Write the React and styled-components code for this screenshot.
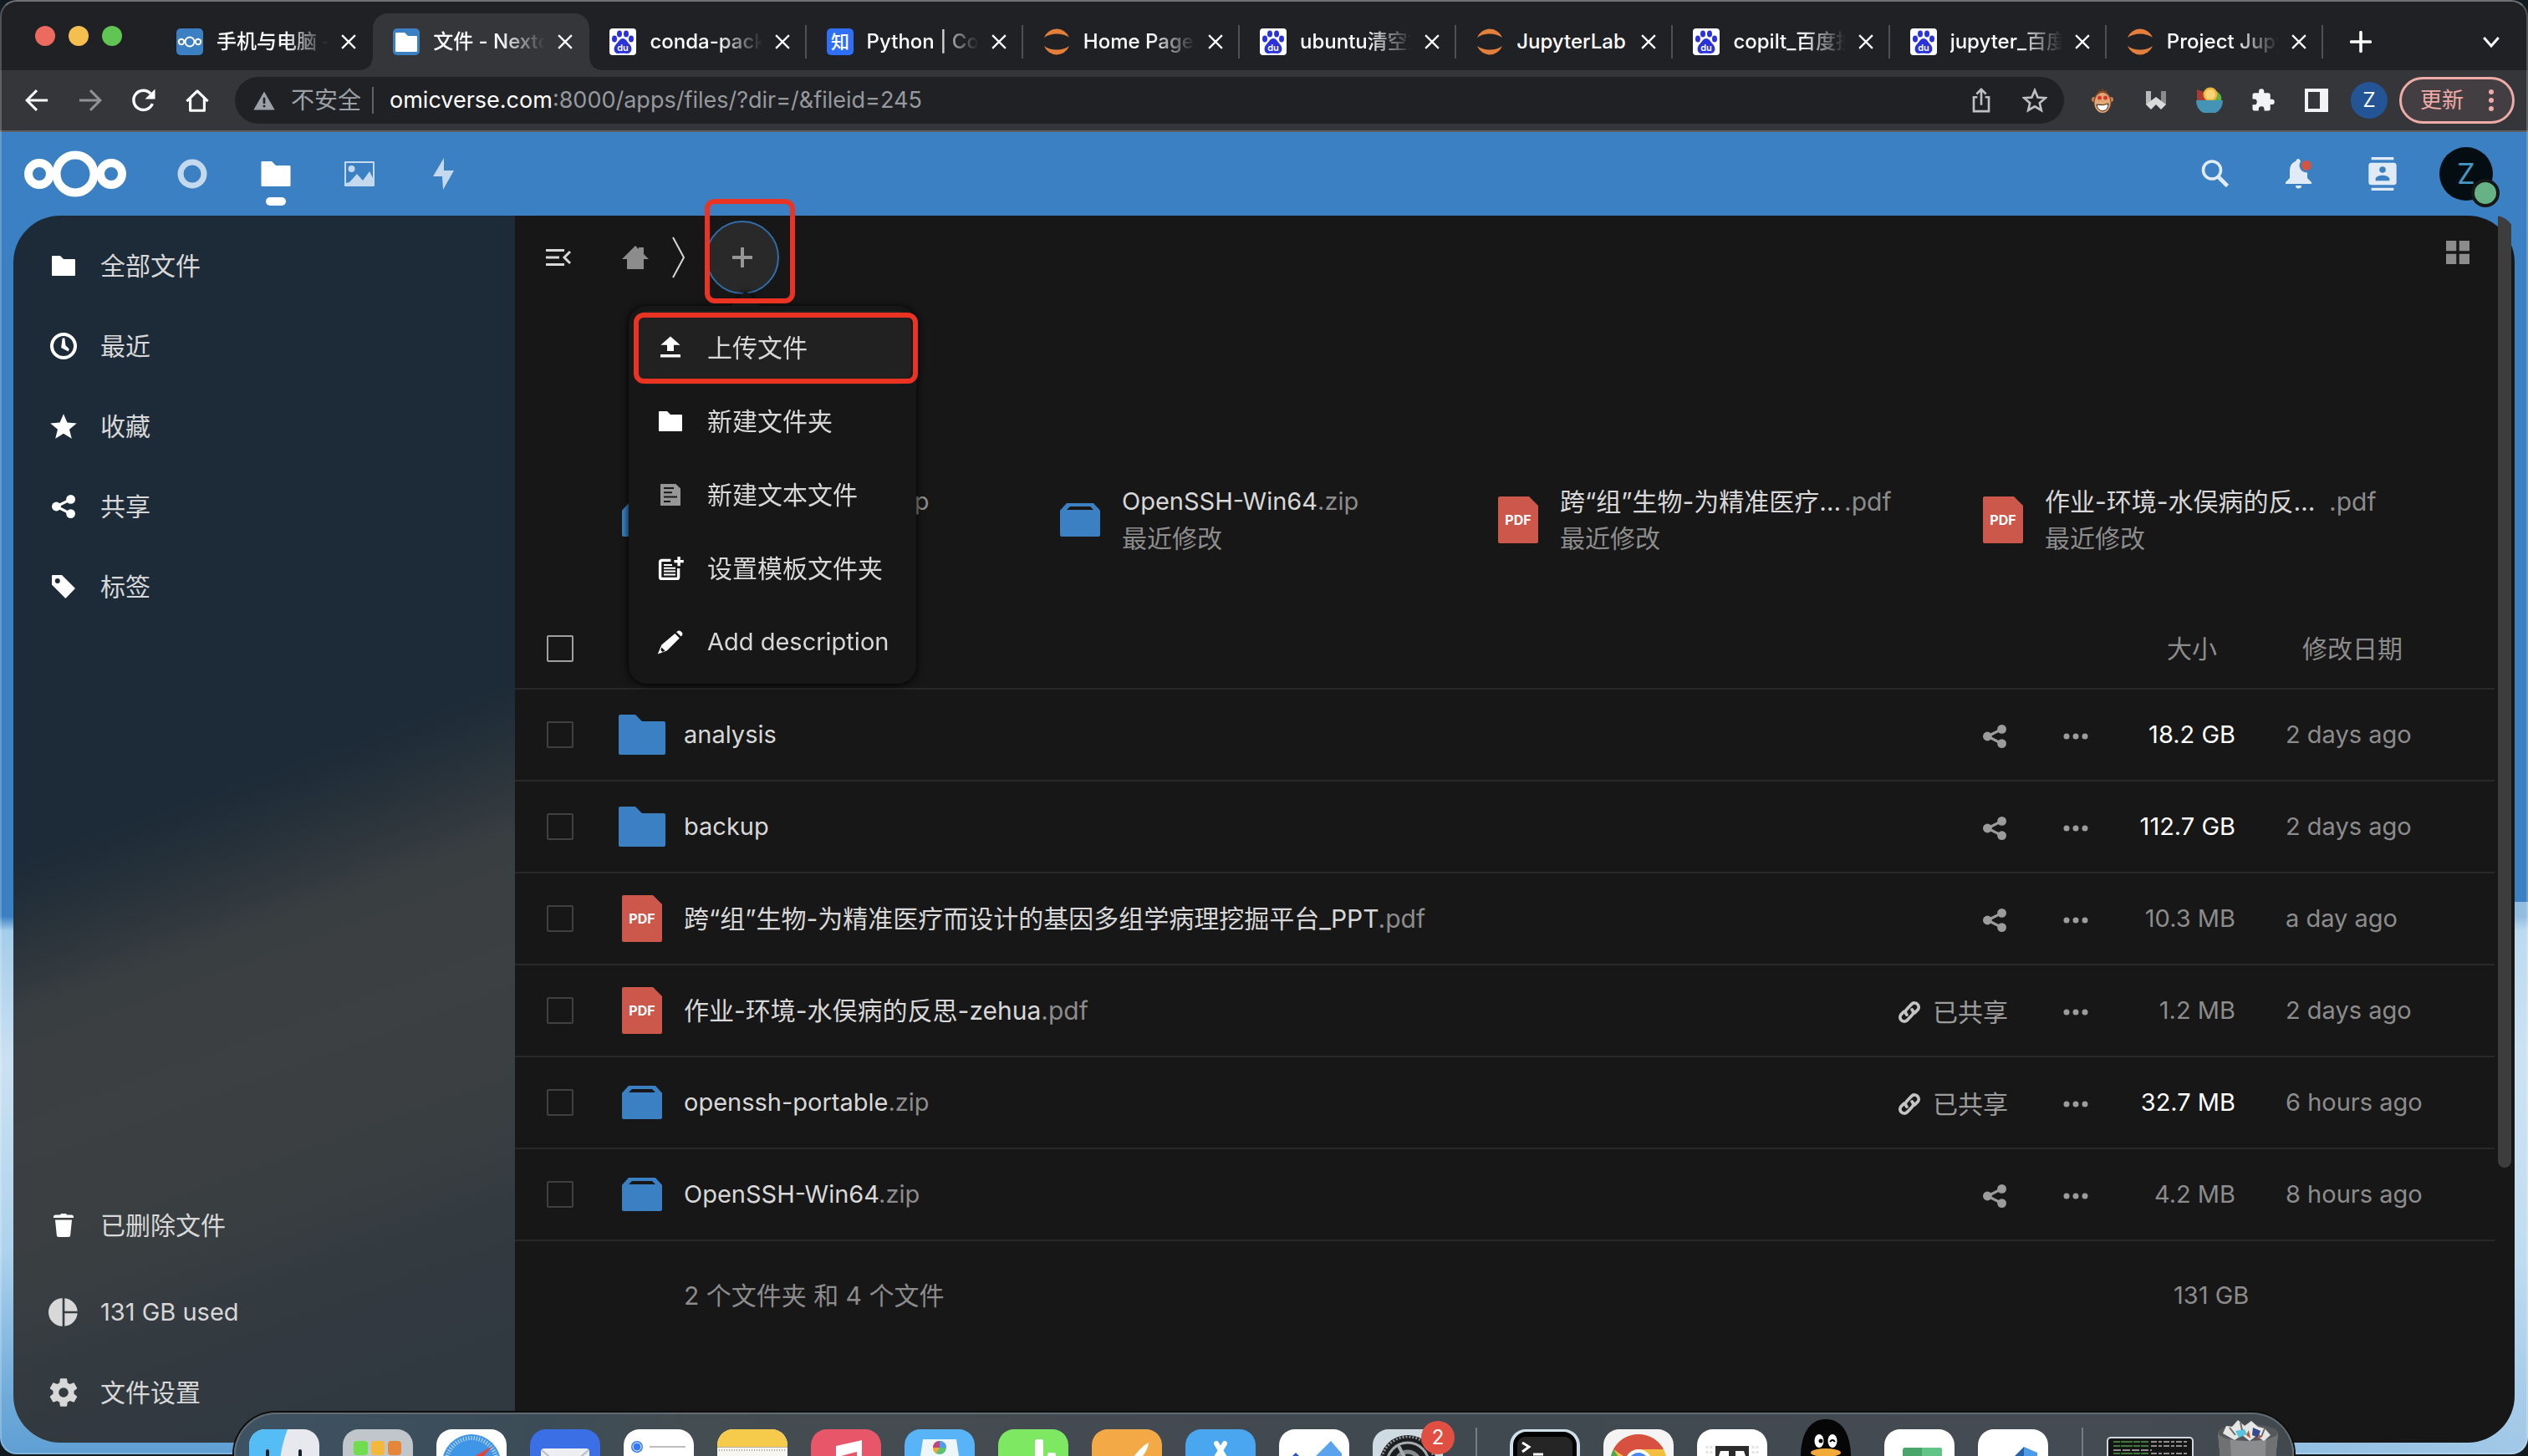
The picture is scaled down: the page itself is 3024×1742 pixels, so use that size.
import React from "react";
import styled, { createGlobalStyle, css } from "styled-components";

const color = {
  blue: "#3a80c3",
  bg: "#171717",
  line: "#292929",
  text: "#d8d8d8",
  muted: "#8c8c8c",
  chrome: "#202124",
  chromeLight: "#35363a",
  red: "#ea3323",
};

/* Latin-only labels are set one step smaller than the Chinese ones. */
const size = { cjk: "30px", latin: "29px" };

const isLatin = (text) => /^[\x20-\x7e]*$/.test(text);

const labelSize = css`
  font-size: ${(p) => (p.$latin ? size.latin : size.cjk)};
`;

const GlobalStyle = createGlobalStyle`
  * { box-sizing: border-box; }
  body {
    margin: 0;
    background: #111a1f;
    font-family: Inter, "Noto Sans CJK SC", sans-serif;
    font-size: ${size.cjk};
    line-height: 44px;
    color: ${color.text};
  }
  button, input {
    font: inherit;
    color: inherit;
    border: 0;
    padding: 0;
    background: none;
    outline: none;
  }
  a { color: inherit; text-decoration: none; }
  svg { display: block; flex: none; }
`;

const Screen = styled.div`
  position: relative;
  height: 100vh;
  padding-bottom: 2px;
  overflow: hidden;
  display: flex;
`;

const Window = styled.div`
  position: relative;
  flex: 1;
  min-width: 0;
  display: flex;
  flex-direction: column;
  border-radius: 20px;
  overflow: hidden;
  background:
    linear-gradient(90deg, transparent 60%, rgba(205, 227, 243, 0.6)) 0 100% / 100% 38% no-repeat,
    linear-gradient(180deg, ${color.blue} 63%, #a4cdea 64%, #cbe1f1 73%, #aed3ec 86%, #6fabda 96%, #5f9fd3 100%);

  &::after {
    content: "";
    position: absolute;
    inset: 0;
    border: 2px solid rgba(255, 255, 255, 0.22);
    border-top-color: rgba(255, 255, 255, 0.36);
    border-radius: 20px;
    pointer-events: none;
  }
`;

/* ---------- browser chrome ---------- */

const TabStrip = styled.div`
  height: 84px;
  flex: none;
  display: flex;
  align-items: flex-end;
  background: ${color.chrome};
  font-size: 24px;
  line-height: 32px;
  color: #fff;
`;

const Lights = styled.div`
  width: 187px;
  height: 82px;
  padding-left: 42px;
  display: flex;
  align-items: center;
  gap: 16px;
`;

const Light = styled.button`
  width: 24px;
  height: 24px;
  border-radius: 50%;
  background: ${(p) => p.$color};
`;

const TabList = styled.div`
  flex: 1;
  min-width: 0;
  display: flex;
`;

const flare = css`
  content: "";
  position: absolute;
  bottom: 0;
  width: 14px;
  height: 14px;
`;

const Tab = styled.div`
  position: relative;
  flex: 1 1 0;
  min-width: 0;
  height: 68px;
  padding-left: 24px;
  display: flex;
  align-items: center;
  border-radius: 18px 18px 0 0;
  ${(p) =>
    p.$active &&
    css`
      background: ${color.chromeLight};
      &::before {
        ${flare}
        left: -14px;
        background: radial-gradient(circle at 0 0, transparent 13px, ${color.chromeLight} 14px);
      }
      &::after {
        ${flare}
        right: -14px;
        background: radial-gradient(circle at 100% 0, transparent 13px, ${color.chromeLight} 14px);
      }
    `}
`;

const TabTitle = styled.button`
  flex: 1;
  min-width: 0;
  margin: 0 10px 0 16px;
  text-align: left;
  white-space: nowrap;
  overflow: hidden;
  font-weight: 500;
  ${(p) => p.$fade && css`mask-image: linear-gradient(90deg, #000 60%, transparent);`}
`;

const TabClose = styled.button`
  width: 28px;
  height: 28px;
  margin-right: 13px;
  display: grid;
  place-items: center;
`;

const TabDivider = styled.i`
  width: 2px;
  height: 40px;
  background: ${(p) => (p.$hidden ? "transparent" : "#4e5054")};
`;

const StripEnd = styled.div`
  width: 245px;
  height: 68px;
  padding: 0 34px 0 32px;
  display: flex;
  align-items: center;
  justify-content: space-between;
`;

const Toolbar = styled.div`
  height: 74px;
  flex: none;
  display: flex;
  align-items: center;
  padding: 0 16px 0 12px;
  background: ${color.chromeLight};
  border-bottom: 2px solid #5f6064;
`;

const ToolButton = styled.button`
  width: 64px;
  height: 56px;
  display: grid;
  place-items: center;
  opacity: ${(p) => (p.disabled ? 0.45 : 1)};
`;

const AddressBar = styled.div`
  flex: 1;
  min-width: 0;
  height: 56px;
  margin: 0 14px 0 13px;
  padding: 0 3px 0 22px;
  display: flex;
  align-items: center;
  border-radius: 28px;
  background: ${color.chrome};
  font-size: 27px;
  line-height: 40px;
`;

const Insecure = styled.span`
  margin: 0 13px 0 19px;
  font-size: 28px;
  color: #9aa0a6;
`;

const AddressRule = styled.i`
  width: 2px;
  height: 32px;
  margin-right: 19px;
  background: #5f6368;
`;

const Host = styled.label`
  color: #fff;
`;

const PathInput = styled.input`
  flex: 1;
  min-width: 0;
  color: #96999e;
`;

const Profile = styled.button`
  width: 44px;
  height: 44px;
  margin: 0 14px 0 9px;
  border-radius: 50%;
  background: #235596;
  color: #fff;
  font-size: 24px;
  line-height: 44px;
`;

const UpdateButton = styled.button`
  width: 138px;
  height: 56px;
  padding: 0 22px 0 22px;
  display: flex;
  align-items: center;
  justify-content: space-between;
  border: 3px solid #efaba7;
  border-radius: 28px;
  background: #433e41;
  color: #efaba7;
  font-size: 26px;
`;

/* ---------- files app ---------- */

const AppHeader = styled.header`
  height: 100px;
  flex: none;
  display: flex;
  align-items: center;
  padding: 0 24px 0 28px;
`;

const Logo = styled.a`
  margin-right: 28px;
`;

const AppNav = styled.nav`
  flex: 1;
  display: flex;
`;

const HeaderLink = styled.a`
  position: relative;
  width: 100px;
  height: 100px;
  display: grid;
  place-items: center;
  color: ${(p) => (p.$active ? "#fff" : "#c4d9ed")};
  ${(p) =>
    p.$active &&
    css`
      &::after {
        content: "";
        position: absolute;
        bottom: 12px;
        width: 24px;
        height: 10px;
        border-radius: 5px;
        background: #fff;
      }
    `}
`;

const HeaderButton = styled.button`
  width: 100px;
  height: 100px;
  display: grid;
  place-items: center;
  color: #e1ebf5;
`;

const Avatar = styled.span`
  position: relative;
  width: 64px;
  height: 64px;
  border-radius: 50%;
  background: #040d12;
  color: #4397c0;
  font-size: 34px;
  line-height: 64px;
`;

const Status = styled.i`
  position: absolute;
  right: -8px;
  bottom: -8px;
  width: 34px;
  height: 34px;
  border-radius: 50%;
  border: 4px solid ${color.bg};
  background: #67b187;
`;

const Content = styled.div`
  flex: 1;
  min-height: 0;
  margin: 0 16px 14px;
  display: flex;
`;

const Sidebar = styled.nav`
  width: 600px;
  flex: none;
  padding: 16px 0;
  display: flex;
  flex-direction: column;
  justify-content: space-between;
  border-radius: 56px 0 0 56px;
  background: linear-gradient(160deg, #1d2b38 0 46%, #253039 50%, #393e41 57%, #3d4042 66%, #393e41 76%, #323a40 86%, #2f3840 100%);
`;

const NavGroup = styled.ul`
  margin: 0;
  padding: 0;
  list-style: none;
  display: flex;
  flex-direction: column;
  gap: 8px;
`;

const NavLink = styled.a`
  height: 88px;
  padding-left: 44px;
  display: flex;
  align-items: center;
  gap: 28px;
  ${labelSize}
`;

const WideLink = styled(NavLink)`
  padding-left: 40px;
  gap: 24px;
`;

const NavSpacer = styled.li`
  height: 0;
`;

const Main = styled.main`
  flex: 1;
  min-width: 0;
  display: flex;
  border-radius: 0 56px 56px 0;
  background: ${color.bg};
`;

const Files = styled.div`
  flex: 1;
  min-width: 0;
`;

const ScrollTrack = styled.div`
  width: 24px;
  padding-left: 4px;
  overflow: hidden;
  border-radius: 0 56px 56px 0 / 0 56px 56px 0;
`;

const ScrollThumb = styled.div`
  width: 16px;
  height: 77.6%;
  border-radius: 0 0 8px 8px;
  background: #3d3d3d;
`;

const Controls = styled.div`
  height: 100px;
  padding-left: 8px;
  display: flex;
  align-items: center;
`;

const IconButton = styled.button`
  width: 88px;
  height: 88px;
  display: grid;
  place-items: center;
  color: ${(p) => p.$color || color.muted};
`;

const Crumb = styled.a`
  width: 88px;
  height: 88px;
  margin-left: 4px;
  display: grid;
  place-items: center;
  color: ${color.muted};
`;

const NewWrap = styled.div`
  position: relative;
  margin-left: 24px;
  z-index: 2;
`;

const NewButton = styled.button`
  width: 88px;
  height: 88px;
  display: grid;
  place-items: center;
  border: 2px solid #2f6ea9;
  border-radius: 50%;
  background: #292929;
  color: #969696;
`;

const ViewToggle = styled(IconButton)`
  margin-left: auto;
  align-self: flex-start;
`;

const Highlight = styled.i`
  position: absolute;
  border: 6px solid ${color.red};
  border-radius: 12px;
  pointer-events: none;
  inset: ${(p) => p.$inset};
`;

const Menu = styled.ul`
  position: absolute;
  top: 102px;
  left: -92px;
  width: 344px;
  margin: 0;
  padding: 6px;
  list-style: none;
  border-radius: 22px;
  background: ${color.bg};
  filter: drop-shadow(0 1px 5px #000);

  &::before {
    content: "";
    position: absolute;
    bottom: 100%;
    left: 122px;
    border: 18px solid transparent;
    border-top: 0;
    border-bottom-color: ${color.bg};
  }
`;

const MenuRow = styled.li`
  position: relative;
`;

const MenuItem = styled.button`
  width: 100%;
  height: 88px;
  padding-left: 28px;
  display: flex;
  align-items: center;
  gap: 28px;
  text-align: left;
  white-space: nowrap;
  border-radius: 18px;
  background: ${(p) => (p.$active ? "#212121" : "none")};
  ${labelSize}
`;

const MenuIcon = styled.span`
  color: ${(p) => (p.$dim ? "#969696" : "#fff")};
`;

const Recommendations = styled.section`
  padding: 218px 0 60px 120px;
  display: grid;
  grid-template-columns: 524fr 524fr 580fr 620fr;
`;

const RecCard = styled.a`
  height: 92px;
  display: flex;
  align-items: center;
  gap: 18px;
  white-space: nowrap;
`;

const RecName = styled.div`
  display: flex;
  ${labelSize}
`;

const RecStem = styled.span`
  min-width: ${(p) => (p.$cut ? "340px" : "0")};
`;

const Muted = styled.span`
  color: ${color.muted};
`;

const Table = styled.table`
  width: 100%;
  table-layout: fixed;
  border-collapse: collapse;
  text-align: left;

  th { font-weight: 400; color: ${color.muted}; }
  th, td { padding: 0; }
`;

const HeadRow = styled.tr`
  height: 96px;
  border-bottom: 2px solid ${color.line};
`;

const FileRow = styled.tr`
  height: 110px;
  border-bottom: 2px solid ${color.line};
`;

const FootRow = styled.tr`
  height: 130px;
  color: ${color.muted};
`;

const Col = styled.col`
  width: ${(p) => p.$w};
`;

const Check = styled.input.attrs({ type: "checkbox" })`
  appearance: none;
  display: block;
  width: 32px;
  height: 32px;
  margin: 0 0 0 38px;
  border: 2px solid ${(p) => (p.$strong ? "#a0a0a0" : "#404040")};
  border-radius: 2px;
`;

const NameLink = styled.a`
  display: flex;
  align-items: center;
  gap: 18px;
  white-space: nowrap;
  ${labelSize}
`;

const RowAction = styled.button`
  display: flex;
  align-items: center;
  gap: 13px;
  margin-left: auto;
  margin-top: 4px;
  color: #9c9c9c;
`;

const ActionsCell = styled.td`
  && { padding-right: 34px; }
`;

const SizeCell = styled.td`
  text-align: right;
  white-space: nowrap;
  font-size: ${size.latin};
  color: ${(p) => (p.$bright ? "#fff" : color.muted)};
`;

const DateCell = styled.td`
  && { padding-left: 60px; }
  font-size: ${size.latin};
  color: ${color.muted};
`;

const SizeHead = styled.th`
  && { padding-right: 22px; }
  text-align: right;
`;

const DateHead = styled.th`
  && { padding-left: 80px; }
`;

const TotalCell = styled.td`
  && { padding-left: 66px; }
  font-size: ${size.latin};
`;

const FootName = styled.td`
  && { padding-left: 82px; }
`;

/* ---------- dock ---------- */

const Dock = styled.div`
  position: absolute;
  bottom: 0;
  left: 50%;
  transform: translateX(-50%);
  height: 52px;
  padding: 18px 16px 0;
  display: flex;
  align-items: flex-start;
  gap: 28px;
  overflow: hidden;
  border: 2px solid #626b70;
  border-bottom: 0;
  border-radius: 50px 50px 0 0;
  box-shadow: 0 0 0 2px #0c0e0f;
  background: linear-gradient(90deg, #3d5262, #3c4c57 15%, #444d51 22%, #434a51 45%, #3f494f 60%, #454b52 90%, #41494f);
`;

const DockItem = styled.button`
  position: relative;
  height: 84px;
`;

const TallDockItem = styled(DockItem)`
  margin-top: -12px;
`;

const DockRule = styled.i`
  width: 2px;
  height: 60px;
  margin: ${(p) => (p.$last ? "-2px 0 0 12px" : "-2px 11px 0")};
  background: #767d82;
`;

const Badge = styled.span`
  position: absolute;
  top: -10px;
  right: -14px;
  width: 40px;
  height: 40px;
  border-radius: 50%;
  background: #e04f41;
  color: #fff;
  font-size: 24px;
  line-height: 40px;
`;

/* ---------- icons ---------- */

const Svg = ({ s = 32, w, h, box = "0 0 16 16", children, ...rest }) => (
  <svg width={w || s} height={h || s} viewBox={box} fill="currentColor" aria-hidden="true" {...rest}>
    {children}
  </svg>
);

const stroke = (width) => ({ fill: "none", stroke: "currentColor", strokeWidth: width });

const FolderIcon = (p) => (
  <Svg {...p}>
    <path d="M1.5 2a.5.5 0 0 0-.5.5v11c0 .3.2.5.5.5h13c.3 0 .5-.2.5-.5v-9a.5.5 0 0 0-.5-.5H8L6 2z" />
  </Svg>
);

const ShareIcon = (p) => (
  <Svg {...p}>
    <circle cx="12.3" cy="3.7" r="2.7" />
    <circle cx="3.7" cy="8" r="2.7" />
    <circle cx="12.3" cy="12.3" r="2.7" />
    <path {...stroke(1.6)} d="M12.3 3.7 3.7 8l8.6 4.3" />
  </Svg>
);

const ClockIcon = () => (
  <Svg>
    <circle cx="8" cy="8" r="7" {...stroke(2)} />
    <path d="M7.3 3.2h1.4l.5 4.4 2.2 2.2-.6 1.4L6.6 9z" />
  </Svg>
);

const StarIcon = () => (
  <Svg>
    <path d="m8 .6 2.2 5.2 5.7.4-4.4 3.7 1.4 5.5L8 12.4l-4.9 3 1.4-5.5L.1 6.2l5.7-.4z" />
  </Svg>
);

const TagIcon = () => (
  <Svg>
    <path fillRule="evenodd" d="M1.5 1H7l8 8-5.8 6L1 6.8V1.5a.5.5 0 0 1 .5-.5zm2.9 2a1.5 1.5 0 1 0 0 3 1.5 1.5 0 0 0 0-3z" />
  </Svg>
);

const TrashIcon = () => (
  <Svg>
    <path d="M6.5 1 6 1.8H3.2c-.7 0-1.2.5-1.2 1v.7h12v-.7c0-.5-.5-1-1.2-1H10L9.5 1zM3 4.7l.9 9.2c.1.7.5 1.1 1.2 1.1h5.8c.7 0 1.1-.4 1.2-1.1l.9-9.2z" />
  </Svg>
);

const QuotaIcon = () => (
  <Svg s={40} box="0 0 24 24">
    <path d="M11.200 2v20A10 10 0 0 1 11.200 2zm1.600 0v9.200H22A10 10 0 0 0 12.800 2zm0 10.800V22A10 10 0 0 0 22 12.800z" />
  </Svg>
);

const CogIcon = () => (
  <Svg s={40} box="0 0 24 24">
    <path d="M12 15.5A3.5 3.5 0 0 1 8.5 12 3.5 3.5 0 0 1 12 8.5a3.5 3.5 0 0 1 3.5 3.5 3.5 3.5 0 0 1-3.5 3.5m7.43-2.53c.04-.32.07-.64.07-.97s-.03-.66-.07-1l2.11-1.63c.19-.15.24-.42.12-.64l-2-3.46c-.12-.22-.39-.31-.61-.22l-2.49 1c-.52-.39-1.06-.73-1.69-.98l-.37-2.65A.506.506 0 0 0 14 2h-4c-.25 0-.46.18-.5.42l-.37 2.65c-.63.25-1.17.59-1.69.98l-2.49-1c-.22-.09-.49 0-.61.22l-2 3.46c-.13.22-.07.49.12.64L4.57 11c-.04.34-.07.67-.07 1s.03.65.07.97l-2.11 1.66c-.19.15-.25.42-.12.64l2 3.46c.12.22.39.3.61.22l2.49-1.01c.52.4 1.06.74 1.69.99l.37 2.65c.04.24.25.42.5.42h4c.25 0 .46-.18.5-.42l.37-2.65c.63-.26 1.17-.59 1.69-.99l2.49 1.01c.22.08.49 0 .61-.22l2-3.46c.12-.22.07-.49-.12-.64z" />
  </Svg>
);

const UploadIcon = () => (
  <Svg>
    <path d="M8 1.200 2.200 6.400H6V10h4V6.400h3.800zM2 12h12v1.800H2z" />
  </Svg>
);

const TextFileIcon = () => (
  <Svg>
    <path fillRule="evenodd" d="M2.500 1.500a.5.5 0 0 0-.5.5v12c0 .3.2.500.5.500h11c.3 0 .5-.2.5-.5V4.200l-2.800-2.700zM4 3.500h6v1H4zm0 2.600h5v1H4zm0 2.700h8v1H4zm0 2.700h4v1H4z" />
  </Svg>
);

const TemplateIcon = () => (
  <Svg>
    <path {...stroke(1.7)} d="M8.200 3.200H2.800a1 1 0 0 0-1 1v9a1 1 0 0 0 1 1h9a1 1 0 0 0 1-1V8" />
    <path d="M12.200 1h1.700v2h2v1.600h-2v2h-1.700v-2h-2V3h2zM4 5.500h5v1H4zM4 7.400h7v1H4zM4 9.300h7v1H4zM4 11.200h7v1H4z" />
  </Svg>
);

const PencilIcon = () => (
  <Svg>
    <path d="M13.200 1.200c-.5 0-.9.200-1.200.500l-.4.400 2.700 2.600.5-.5c.6-.7.500-1.400 0-1.900l-.7-.7c-.2-.3-.5-.4-.9-.4zM10.700 3 2.700 9.800.4 15.200l5.500-2L13.400 5.800z" />
    <path d="m2.600 11.300 2.200 2-1.600.7-1-1z" fill="#171717" />
  </Svg>
);

const ZipIcon = () => (
  <Svg s={64} color={color.blue}>
    <path fillRule="evenodd" d="M4 3h8l2 2.200v7.300c0 .3-.2.500-.5.500h-11a.5.500 0 0 1-.5-.5V5.200zM5 4 4 5h8l-1-1z" />
  </Svg>
);

const PdfIcon = () => (
  <Svg s={64} box="0 0 64 64">
    <path fill="#cc584c" d="M10 4h35l11 11v43a2 2 0 0 1-2 2H10a2 2 0 0 1-2-2V6a2 2 0 0 1 2-2z" />
    <text x="32" y="38" textAnchor="middle" fill="#fff" fontFamily="Inter, sans-serif" fontWeight="700" fontSize="16">PDF</text>
  </Svg>
);

const FileIcon = ({ type }) =>
  type === "folder" ? <FolderIcon s={64} color={color.blue} /> : type === "pdf" ? <PdfIcon /> : <ZipIcon />;

const LinkIcon = () => (
  <Svg s={30} box="0 0 24 24" color="#c4c4c4">
    <g {...stroke(3)} strokeLinecap="round">
      <path d="M9.500 14.500c-1.700-1.700-1.500-3.800 0-5.300l5-5.200a4 4 0 0 1 5.600 5.600L17 12.700" />
      <path d="M14.500 9.500c1.700 1.700 1.500 3.800 0 5.300l-5 5.200a4 4 0 0 1-5.600-5.600L7 11.300" />
    </g>
  </Svg>
);

const DotsIcon = () => (
  <Svg s={34} box="0 0 34 34">
    <circle cx="6" cy="17" r="3.5" />
    <circle cx="17" cy="17" r="3.5" />
    <circle cx="28" cy="17" r="3.5" />
  </Svg>
);

const CrossIcon = () => (
  <Svg s={18}>
    <path {...stroke(2)} d="m1 1 14 14M15 1 1 15" />
  </Svg>
);

/* ---------- favicons ---------- */

const NextcloudFav = () => (
  <Svg box="0 0 32 32">
    <rect width="32" height="32" rx="5" fill={color.blue} />
    <g fill="none" stroke="#fff" strokeWidth="2">
      <circle cx="16" cy="16" r="5.500" />
      <circle cx="6" cy="16" r="3.200" />
      <circle cx="26" cy="16" r="3.200" />
    </g>
  </Svg>
);

const FilesFav = () => (
  <Svg box="0 0 32 32">
    <rect width="32" height="32" rx="5" fill={color.blue} />
    <path fill="#fff" d="M4 5h10l4 4h10a1 1 0 0 1 1 1v17a1 1 0 0 1-1 1H4a1 1 0 0 1-1-1V6a1 1 0 0 1 1-1z" />
  </Svg>
);

const BaiduFav = () => (
  <Svg box="0 0 32 32">
    <rect width="32" height="32" rx="4" fill="#fff" />
    <g fill="#2a32dc">
      <ellipse cx="12" cy="6.500" rx="3" ry="4" />
      <ellipse cx="20" cy="6.500" rx="3" ry="4" />
      <ellipse cx="6" cy="12.500" rx="3" ry="4" />
      <ellipse cx="26" cy="12.500" rx="3" ry="4" />
      <path d="M16 12c4 0 5 4 8 7 4 4 3 11-3 11-3 0-7-.5-10 0-6 .5-7-7-3-11 3-3 4-7 8-7z" />
    </g>
    <text x="16" y="27" textAnchor="middle" fill="#fff" fontFamily="Inter, sans-serif" fontWeight="600" fontSize="11">du</text>
  </Svg>
);

const ZhihuFav = () => (
  <Svg box="0 0 32 32">
    <rect width="32" height="32" rx="5" fill="#2f6ff6" />
    <text x="16" y="24" textAnchor="middle" fill="#fff" fontFamily="'Noto Sans CJK SC', sans-serif" fontWeight="500" fontSize="22">知</text>
  </Svg>
);

const JupyterFav = () => (
  <Svg box="0 0 32 32" fill="#e37e3b">
    <path d="M1 11a16 16 0 0 1 30 0c-8-6-22-6-30 0zM1 21a16 16 0 0 0 30 0c-8 6-22 6-30 0z" />
  </Svg>
);

/* ---------- dock artwork ---------- */

const Tile = ({ fill, children }) => (
  <svg width="84" height="84" viewBox="0 0 84 84" aria-hidden="true">
    <rect width="84" height="84" rx="19" fill={fill} />
    {children}
  </svg>
);

const ticks = Array.from({ length: 60 }, (_, i) => i * 6);

const FinderTile = () => (
  <Tile fill="#e8e9ee">
    <path d="M19 0h27c-6 16-9 30-10 48v36H19A19 19 0 0 1 0 65V19A19 19 0 0 1 19 0z" fill="#55bdf5" />
    <path d="M22 26v10M61 26v10" stroke="#17212b" strokeWidth="4" strokeLinecap="round" />
  </Tile>
);

const LaunchpadTile = () => (
  <Tile fill="#c0c6ca">
    <rect x="13" y="14" width="17" height="17" rx="4" fill="#6fdd4d" />
    <rect x="34" y="14" width="16" height="17" rx="4" fill="#f3b93c" />
    <rect x="54" y="14" width="16" height="17" rx="4" fill="#e6863a" />
  </Tile>
);

const SafariTile = () => (
  <Tile fill="#fff">
    <circle cx="42" cy="41" r="35" fill="#3f95e6" />
    {ticks.map((a) => (
      <path key={a} d="M42 8v5" stroke="#cfe4f8" strokeWidth="1" transform={`rotate(${a} 42 41)`} />
    ))}
    <path d="M67 20 38 37l8 8z" fill="#e8433a" />
  </Tile>
);

const MailTile = () => (
  <Tile fill="#3a6fe6">
    <rect x="13" y="23" width="58" height="40" rx="4" fill="#eceef1" />
    <path d="m14 25 28 24 28-24" fill="none" stroke="#b9bdc4" strokeWidth="2" />
  </Tile>
);

const RemindersTile = () => (
  <Tile fill="#fff">
    <circle cx="16" cy="21" r="7" fill="#3478f6" />
    <circle cx="16" cy="21" r="5" fill="none" stroke="#fff" strokeWidth="1" />
    <path d="M31 21h43" stroke="#bfbfc2" strokeWidth="2" />
  </Tile>
);

const NotesTile = () => (
  <Tile fill="#f8f6f0">
    <path d="M19 0h46a19 19 0 0 1 19 19v2H0v-2A19 19 0 0 1 19 0z" fill="#f6cb4b" />
    <path d="M0 21.500h84" stroke="#b7b2a5" strokeWidth="1" />
    <path d="M2 25h80" stroke="#a9a59b" strokeWidth="2" strokeDasharray="1 2" />
  </Tile>
);

const MusicTile = () => (
  <Tile fill="#e8566a">
    <path d="M30 20 61 13v34h-6V27l-19 5v24h-6z" fill="#fff" />
  </Tile>
);

const KeynoteTile = () => (
  <Tile fill="#58b4f6">
    <path d="M22 12h40l6 40H16z" fill="#eef5fb" />
    <circle cx="42" cy="22" r="8" fill="#5cbf72" />
    <path d="M42 22v-8a8 8 0 0 0-8 8z" fill="#c2447a" />
    <path d="M42 22v-8a8 8 0 0 1 8 8z" fill="#4d9df0" />
    <path d="M42 22h-8a8 8 0 0 0 4 7z" fill="#f0a63c" />
  </Tile>
);

const NumbersTile = () => (
  <Tile fill="#7fe863">
    <rect x="44" y="12" width="10" height="50" rx="3" fill="#fff" />
    <rect x="59" y="28" width="10" height="34" rx="3" fill="#fff" />
  </Tile>
);

const PagesTile = () => (
  <Tile fill="#f3a945">
    <path d="M68 16c-8 4-17 14-25 28h6c11-9 18-18 19-28z" fill="#fff" />
  </Tile>
);

const AppStoreTile = () => (
  <Tile fill="#4ba6f0">
    <path d="m37 17 12 20M47 17 26 52" stroke="#fff" strokeWidth="6" strokeLinecap="round" />
  </Tile>
);

const BlueMarkTile = () => (
  <Tile fill="#fff">
    <path d="m62 14 13 15v40L34 42z" fill="#5ba3ec" />
    <path d="m20 28 14 14-12 8-8-16z" fill="#2b58bb" />
  </Tile>
);

const SettingsTile = () => (
  <Tile fill="#cfdbe2">
    <circle cx="42" cy="41" r="34" fill="#1c1d1f" />
    <circle cx="42" cy="41" r="32" fill="none" stroke="#8f969b" strokeWidth="3" strokeDasharray="2 2" />
    <circle cx="42" cy="41" r="25" fill="none" stroke="#a6abae" strokeWidth="3" />
    <circle cx="42" cy="41" r="14" fill="none" stroke="#84898c" strokeWidth="5" />
    <path d="M42 41 30 18M42 41h26" stroke="#a6abae" strokeWidth="4" />
  </Tile>
);

const TerminalTile = () => (
  <Tile fill="#cfe0ea">
    <rect x="4" y="3" width="76" height="78" rx="16" fill="#000" />
    <rect x="9" y="9" width="66" height="66" rx="9" fill="#252525" />
    <path d="m15 16 8 5-8 6" fill="none" stroke="#fff" strokeWidth="3" />
    <path d="M28 30h12" stroke="#fff" strokeWidth="3" />
  </Tile>
);

const ChromeTile = () => (
  <Tile fill="#f4f4f4">
    <circle cx="42" cy="40" r="34" fill="#f3bf3f" />
    <path d="M12 24a34 34 0 0 1 60 0H42a16 16 0 0 0-15 10z" fill="#d85040" />
    <path d="M12 24 28 48l14 26A34 34 0 0 1 12 24z" fill="#4fa657" />
    <circle cx="42" cy="40" r="16" fill="#fff" />
    <circle cx="42" cy="40" r="12" fill="#4c87ee" />
  </Tile>
);

const TyporaTile = () => (
  <Tile fill="#fff">
    <path d="M22 20h40v12h-4l-2-6H46v36h-8V26H28l-2 6h-4z" fill="#2c2c2c" />
    <path d="M12 20v12M17 20v12M67 20v12M72 20v12" stroke="#e2e2e2" strokeWidth="3" strokeDasharray="3 3" />
  </Tile>
);

const PenguinTile = () => (
  <svg width="84" height="96" viewBox="0 -12 84 96" aria-hidden="true">
    <path d="M42-12c20 0 29 18 30 42v54H12V30c1-24 10-42 30-42z" fill="#060606" />
    <ellipse cx="34" cy="14" rx="5.500" ry="8" fill="#fff" />
    <ellipse cx="50" cy="14" rx="5.500" ry="8" fill="#fff" />
    <circle cx="36" cy="14" r="2.500" fill="#000" />
    <path d="M47 15q3-4 6 0" fill="none" stroke="#000" strokeWidth="2" />
    <ellipse cx="42" cy="28" rx="18" ry="5" fill="#f2ab3a" />
  </svg>
);

const ExcelTile = () => (
  <Tile fill="#fff">
    <rect x="22" y="22" width="47" height="50" rx="3" fill="#4aa56b" />
    <path d="M45 22h21a3 3 0 0 1 3 3v13H45z" fill="#62c587" />
    <rect x="7" y="42" width="32" height="30" rx="3" fill="#2b7a45" />
  </Tile>
);

const CodeTile = () => (
  <Tile fill="#fff">
    <path d="M55 21 31 45l-14-3-5 6 20 20 24-10z" fill="#2861a8" />
    <path d="m55 21 16 7v44H55z" fill="#4c9bea" />
    <path d="m12 47 6-5 16 18z" fill="#3678c8" />
  </Tile>
);

const MinimizedWindow = () => (
  <svg width="104" height="84" viewBox="0 0 104 84" aria-hidden="true">
    <rect x="1" y="10" width="102" height="80" rx="4" fill="#151515" stroke="#cfd8de" strokeWidth="2" />
    {[15, 20, 29, 35].map((y) => (
      <g key={y}>
        <path d={`M8 ${y}h42`} stroke="#3f7a3c" strokeWidth="2" strokeDasharray="8 1 14 1" />
        <path d={`M53 ${y}h44`} stroke="#8d8d8d" strokeWidth="2" strokeDasharray="7 2 4 2" />
      </g>
    ))}
    <path d="M8 25h46" stroke="#8d8d8d" strokeWidth="2" strokeDasharray="9 2" />
  </svg>
);

const TrashTile = () => (
  <svg width="74" height="96" viewBox="1 -14 74 96" aria-hidden="true">
    <path d="M2 2h72l-8 84H10z" fill="#8b8c8e" />
    <path d="M2 2h14l6 84H10zM60 2h14l-8 84h-9z" fill="#6f7173" />
    <ellipse cx="38" cy="2" rx="36" ry="10" fill="#55585a" />
    <path d="m8 3 4-9 7 1 7-8 8 7 8-6 8 7 8 2 7 8-8 7-9-6-8 6-9-7-9 6z" fill="#e6e6e4" />
    <path d="m23 0 11-2 3 6-10 4z" fill="#57c3dc" />
    <path d="m44-4 9 4-3 8-7-3z" fill="#344a8f" />
    <path d="m36 5 3-6 2 10zM51 4l4 3-5 3z" fill="#c4562f" />
    <path d="m16-4 7 9M29-10l2 9M58-3l-4 10" stroke="#6b6b6b" strokeWidth="2" />
  </svg>
);

/* ---------- data ---------- */

const tabs = [
  { title: "手机与电脑 - 教程", icon: <NextcloudFav />, fade: true },
  { title: "文件 - Nextcloud", icon: <FilesFav />, fade: true, active: true },
  { title: "conda-pack_百度", icon: <BaiduFav />, fade: true, rule: true },
  { title: "Python | Conda", icon: <ZhihuFav />, fade: true, rule: true },
  { title: "Home Page -", icon: <JupyterFav />, fade: true, rule: true },
  { title: "ubuntu清空文件", icon: <BaiduFav />, fade: true, rule: true },
  { title: "JupyterLab", icon: <JupyterFav />, rule: true },
  { title: "copilt_百度搜索", icon: <BaiduFav />, fade: true, rule: true },
  { title: "jupyter_百度搜索", icon: <BaiduFav />, fade: true, rule: true },
  { title: "Project Jupyter", icon: <JupyterFav />, fade: true, rule: true },
];

const navTop = [
  { label: "全部文件", icon: <FolderIcon color="#fff" /> },
  { label: "最近", icon: <ClockIcon /> },
  { label: "收藏", icon: <StarIcon /> },
  { label: "共享", icon: <ShareIcon /> },
  { label: "标签", icon: <TagIcon /> },
];

const menuItems = [
  { label: "上传文件", icon: <UploadIcon />, active: true },
  { label: "新建文件夹", icon: <FolderIcon /> },
  { label: "新建文本文件", icon: <TextFileIcon />, dim: true },
  { label: "设置模板文件夹", icon: <TemplateIcon /> },
  { label: "Add description", icon: <PencilIcon /> },
];

const recommended = [
  { name: "openssh-portable", ext: ".zip", type: "zip" },
  { name: "OpenSSH-Win64", ext: ".zip", type: "zip" },
  { name: "跨“组”生物-为精准医疗…", ext: ".pdf", type: "pdf", cut: true },
  { name: "作业-环境-水俣病的反…", ext: ".pdf", type: "pdf", cut: true },
];

const files = [
  { name: "analysis", ext: "", type: "folder", size: "18.2 GB", date: "2 days ago", bright: true },
  { name: "backup", ext: "", type: "folder", size: "112.7 GB", date: "2 days ago", bright: true },
  { name: "跨“组”生物-为精准医疗而设计的基因多组学病理挖掘平台_PPT", ext: ".pdf", type: "pdf", size: "10.3 MB", date: "a day ago" },
  { name: "作业-环境-水俣病的反思-zehua", ext: ".pdf", type: "pdf", size: "1.2 MB", date: "2 days ago", shared: true },
  { name: "openssh-portable", ext: ".zip", type: "zip", size: "32.7 MB", date: "6 hours ago", bright: true, shared: true },
  { name: "OpenSSH-Win64", ext: ".zip", type: "zip", size: "4.2 MB", date: "8 hours ago" },
];

const dockLeft = [
  { name: "Finder", Art: FinderTile },
  { name: "Launchpad", Art: LaunchpadTile },
  { name: "Safari", Art: SafariTile },
  { name: "Mail", Art: MailTile },
  { name: "Reminders", Art: RemindersTile },
  { name: "Notes", Art: NotesTile },
  { name: "Music", Art: MusicTile },
  { name: "Keynote", Art: KeynoteTile },
  { name: "Numbers", Art: NumbersTile },
  { name: "Pages", Art: PagesTile },
  { name: "App Store", Art: AppStoreTile },
  { name: "Editor", Art: BlueMarkTile },
  { name: "Settings", Art: SettingsTile, badge: 2 },
];

const dockRight = [
  { name: "Terminal", Art: TerminalTile },
  { name: "Chrome", Art: ChromeTile },
  { name: "Typora", Art: TyporaTile },
  { name: "QQ", Art: PenguinTile, Item: TallDockItem },
  { name: "Excel", Art: ExcelTile },
  { name: "Code", Art: CodeTile },
];

/* ---------- sections ---------- */

const BrowserTabs = () => (
  <TabStrip>
    <Lights>
      <Light $color="#ed6a5e" aria-label="Close" />
      <Light $color="#f4bf4f" aria-label="Minimize" />
      <Light $color="#61c554" aria-label="Zoom" />
    </Lights>
    <TabList>
      {tabs.map((t) => (
        <Tab key={t.title} $active={t.active}>
          {t.icon}
          <TabTitle $fade={t.fade}>{t.title}</TabTitle>
          <TabClose aria-label="Close tab"><CrossIcon /></TabClose>
          <TabDivider $hidden={!t.rule} />
        </Tab>
      ))}
    </TabList>
    <StripEnd>
      <button aria-label="New tab">
        <Svg s={26}><path {...stroke(2.2)} d="M8 1v14M1 8h14" strokeLinecap="round" /></Svg>
      </button>
      <button aria-label="Search tabs">
        <Svg s={20}><path {...stroke(2.4)} d="m1 4 7 8 7-8" /></Svg>
      </button>
    </StripEnd>
  </TabStrip>
);

const BrowserToolbar = () => (
  <Toolbar>
    <ToolButton aria-label="Back">
      <Svg s={28} color="#fff"><path {...stroke(1.7)} d="M15.5 8h-14M8 1.200 1.200 8 8 14.800" /></Svg>
    </ToolButton>
    <ToolButton aria-label="Forward" disabled>
      <Svg s={28} color="#fff"><path {...stroke(1.7)} d="M.5 8h14M8 1.200 14.800 8 8 14.800" /></Svg>
    </ToolButton>
    <ToolButton aria-label="Reload">
      <Svg s={30} color="#fff">
        <path {...stroke(1.8)} d="M13.500 10.200A6.200 6.200 0 1 1 12.300 3.700" />
        <path d="M15.200.8v6.400H8.800z" />
      </Svg>
    </ToolButton>
    <ToolButton aria-label="Home">
      <Svg s={28} color="#fff"><path {...stroke(1.8)} d="M3.200 7v8h9.600V7M.8 8.600 8 1.600l7.200 7" strokeLinejoin="round" /></Svg>
    </ToolButton>
    <AddressBar>
      <Svg s={26} color="#9aa0a6">
        <path fillRule="evenodd" d="M8 1.500 15.800 15H.2zM7.200 6v4.500h1.600V6zm0 5.500V13h1.600v-1.500z" />
      </Svg>
      <Insecure>不安全</Insecure>
      <AddressRule />
      <Host htmlFor="address">omicverse.com</Host>
      <PathInput id="address" defaultValue=":8000/apps/files/?dir=/&fileid=245" />
      <ToolButton aria-label="Share page">
        <Svg s={30} color="#bdc1c6"><path {...stroke(1.4)} d="M5.500 6H3.200v9h9.600V6h-2.300M8 11V1.200M5 4l3-3 3 3" /></Svg>
      </ToolButton>
      <ToolButton aria-label="Bookmark">
        <Svg s={30} color="#bdc1c6">
          <path {...stroke(1.4)} d="m8 1.600 1.900 4.500 4.900.4-3.700 3.200 1.100 4.700L8 11.900l-4.200 2.500 1.100-4.700-3.700-3.200 4.900-.4z" />
        </Svg>
      </ToolButton>
    </AddressBar>
    <ToolButton aria-label="Monkey extension">
      <Svg box="0 0 32 32">
        <path d="m11 8 1-5 3 2 1-4 2 4 3-2v6z" fill="#70401f" />
        <circle cx="6" cy="15" r="3" fill="#c98350" />
        <circle cx="26" cy="15" r="3" fill="#c98350" />
        <ellipse cx="16" cy="18" rx="10.500" ry="13" fill="#8a4f2a" />
        <ellipse cx="16" cy="19" rx="9.500" ry="12" fill="#e3a878" />
        <circle cx="12.500" cy="13" r="2.500" fill="#d8372c" />
        <circle cx="19.500" cy="13" r="2.500" fill="#d8372c" />
        <path d="M9 21q7 2 14-1 0 8-7 9-6-1-7-8z" fill="#fff" stroke="#3a2314" />
      </Svg>
    </ToolButton>
    <ToolButton aria-label="W extension">
      <Svg s={26} box="0 0 26 26">
        <path d="M1 2h6v20L1 18z" fill="#b9b9b9" />
        <path d="M25 2h-6v20l6-4z" fill="#8b8b8b" />
        <path d="m1 18 12-9 12 9-6 6-6-6-6 6z" fill="#dadada" />
      </Svg>
    </ToolButton>
    <ToolButton aria-label="Bowl extension">
      <Svg box="0 0 32 32">
        <path d="m1 3 11 4v10H1z" fill="#a93b34" />
        <path d="M24 5q8 4 6 12h-9z" fill="#61b247" />
        <circle cx="17" cy="9" r="8.500" fill="#f2b33c" />
        <circle cx="17" cy="9" r="6" fill="#f8d477" />
        <path d="M0 16h32q0 11-9 15H9Q0 27 0 16z" fill="#4593b5" />
      </Svg>
    </ToolButton>
    <ToolButton aria-label="Extensions">
      <Svg s={30} box="0 0 24 24" color="#f1f3f4">
        <path d="M20.500 11H19V7a2 2 0 0 0-2-2h-4V3.500a2.500 2.500 0 0 0-5 0V5H4a2 2 0 0 0-2 2v3.800h1.500a2.700 2.700 0 0 1 0 5.400H2V20a2 2 0 0 0 2 2h3.800v-1.500a2.700 2.700 0 0 1 5.400 0V22H17a2 2 0 0 0 2-2v-4h1.500a2.500 2.500 0 0 0 0-5z" />
      </Svg>
    </ToolButton>
    <ToolButton aria-label="Side panel">
      <Svg s={28} color="#f1f3f4"><path fillRule="evenodd" d="M0 0h16v16H0zM2.300 2.300v11.400h8V2.300z" /></Svg>
    </ToolButton>
    <Profile>Z</Profile>
    <UpdateButton>
      更新
      <Svg w={6} h={28} box="0 0 6 28">
        <circle cx="3" cy="4" r="3" /><circle cx="3" cy="14" r="3" /><circle cx="3" cy="24" r="3" />
      </Svg>
    </UpdateButton>
  </Toolbar>
);

const CloudHeader = () => (
  <AppHeader>
    <Logo href="#" aria-label="Nextcloud">
      <svg width="124" height="58" viewBox="0 0 124 58" fill="none" stroke="#fff" aria-hidden="true">
        <circle cx="62" cy="29" r="22.500" strokeWidth="10" />
        <circle cx="19" cy="29" r="13" strokeWidth="10" />
        <circle cx="105" cy="29" r="13" strokeWidth="10" />
      </svg>
    </Logo>
    <AppNav>
      <HeaderLink href="#" aria-label="Dashboard">
        <Svg s={36} box="0 0 36 36"><circle cx="18" cy="18" r="14" {...stroke(7)} /></Svg>
      </HeaderLink>
      <HeaderLink href="#" aria-label="Files" $active><FolderIcon s={40} /></HeaderLink>
      <HeaderLink href="#" aria-label="Photos">
        <Svg s={36} box="0 0 36 36">
          <path fillRule="evenodd" d="M1 3h34a1 1 0 0 1 1 1v28a1 1 0 0 1-1 1H1a1 1 0 0 1-1-1V4a1 1 0 0 1 1-1zm1 2v24l4-1 9-10 7 8 8-11 4 8V5z" />
          <circle cx="8.500" cy="12" r="4" />
        </Svg>
      </HeaderLink>
      <HeaderLink href="#" aria-label="Activity">
        <Svg s={38} box="0 0 38 38"><path d="M20 0 7 22h11l1 16 13-23H20z" /></Svg>
      </HeaderLink>
    </AppNav>
    <HeaderButton aria-label="Search">
      <Svg s={36} box="0 0 36 36">
        <circle cx="14" cy="13.500" r="10.500" {...stroke(3.6)} />
        <path {...stroke(4.6)} d="m21 21 11.500 11.500" />
      </Svg>
    </HeaderButton>
    <HeaderButton aria-label="Notifications">
      <Svg s={36} box="0 0 36 36">
        <path d="M17 0c2 0 2 2 3 3 6 2 8 6 8 12v8l5 5v2H2v-2l5-5v-8c0-6 2-10 7-12 1-1 1-3 3-3zM14 32h7a3.500 3.500 0 0 1-7 0z" />
        <circle cx="27" cy="8" r="8.500" fill={color.blue} />
        <circle cx="27" cy="8" r="6" fill="#d2553f" />
      </Svg>
    </HeaderButton>
    <HeaderButton aria-label="Contacts">
      <Svg s={40} box="0 0 24 24">
        <path d="M20 0H4v2h16V0M4 24h16v-2H4v2M20 4H4a2 2 0 0 0-2 2v12a2 2 0 0 0 2 2h16a2 2 0 0 0 2-2V6a2 2 0 0 0-2-2m-8 2.750A2.250 2.250 0 0 1 14.250 9 2.250 2.250 0 0 1 12 11.250 2.250 2.250 0 0 1 9.750 9 2.250 2.250 0 0 1 12 6.750M17 17H7v-1.500c0-1.670 3.330-2.500 5-2.500s5 .83 5 2.500V17z" />
      </Svg>
    </HeaderButton>
    <HeaderButton aria-label="Account"><Avatar>Z<Status /></Avatar></HeaderButton>
  </AppHeader>
);

const SideNav = () => (
  <Sidebar>
    <NavGroup>
      {navTop.map((n) => (
        <li key={n.label}><NavLink href="#"><MenuIcon>{n.icon}</MenuIcon>{n.label}</NavLink></li>
      ))}
    </NavGroup>
    <NavGroup>
      <li><NavLink href="#"><MenuIcon><TrashIcon /></MenuIcon>已删除文件</NavLink></li>
      <NavSpacer />
      <li><WideLink href="#" $latin><QuotaIcon />131 GB used</WideLink></li>
      <li><WideLink href="#"><CogIcon />文件设置</WideLink></li>
    </NavGroup>
  </Sidebar>
);

const Breadcrumbs = () => (
  <Controls>
    <IconButton $color={color.text} aria-label="Toggle navigation">
      <Svg w={32} h={24} box="0 0 32 24">
        <path {...stroke(3)} d="M1 3.500h22M1 12h16M1 20.500h22M30 5l-7 7 7 7" />
      </Svg>
    </IconButton>
    <Crumb href="#" aria-label="Home">
      <Svg><path d="M8 1 0 9h3v6h10V9h3l-3-3V2h-3v1z" /></Svg>
    </Crumb>
    <Svg w={16} h={50} box="0 0 16 50" color={color.text}><path {...stroke(2)} d="m1 1 13 24L1 49" /></Svg>
    <NewWrap>
      <NewButton aria-label="New">
        <Svg s={24} box="0 0 24 24"><path {...stroke(4)} d="M12 0v24M0 12h24" /></Svg>
      </NewButton>
      <Menu>
        {menuItems.map((m) => (
          <MenuRow key={m.label}>
            <MenuItem $active={m.active} $latin={isLatin(m.label)}>
              <MenuIcon $dim={m.dim}>{m.icon}</MenuIcon>
              {m.label}
            </MenuItem>
            {m.active && <Highlight $inset="2px -8px 1px 0" />}
          </MenuRow>
        ))}
      </Menu>
      <Highlight $inset="-26px -19px -11px -1px" />
    </NewWrap>
    <ViewToggle aria-label="Grid view">
      <Svg s={28}><path d="M0 0h7v7H0zM9 0h7v7H9zM0 9h7v7H0zM9 9h7v7H9z" /></Svg>
    </ViewToggle>
  </Controls>
);

const FileTable = () => (
  <Table>
    <colgroup>
      <Col $w="120px" /><Col /><Col $w="220px" /><Col $w="132px" /><Col $w="140px" /><Col $w="310px" />
    </colgroup>
    <thead>
      <HeadRow>
        <th><Check $strong aria-label="Select all" /></th>
        <th colSpan={3} aria-label="Name" />
        <SizeHead>大小</SizeHead>
        <DateHead>修改日期</DateHead>
      </HeadRow>
    </thead>
    <tbody>
      {files.map((f) => (
        <FileRow key={f.name}>
          <td><Check aria-label={f.name} /></td>
          <td>
            <NameLink href="#" $latin={isLatin(f.name)}>
              <FileIcon type={f.type} />
              <span>{f.name}<Muted>{f.ext}</Muted></span>
            </NameLink>
          </td>
          <td>
            <RowAction aria-label="Share">
              {f.shared ? <><LinkIcon />已共享</> : <ShareIcon />}
            </RowAction>
          </td>
          <ActionsCell><RowAction aria-label="Actions"><DotsIcon /></RowAction></ActionsCell>
          <SizeCell $bright={f.bright}>{f.size}</SizeCell>
          <DateCell>{f.date}</DateCell>
        </FileRow>
      ))}
    </tbody>
    <tfoot>
      <FootRow>
        <td />
        <FootName colSpan={3}>2 个文件夹 和 4 个文件</FootName>
        <TotalCell colSpan={2}>131 GB</TotalCell>
      </FootRow>
    </tfoot>
  </Table>
);

const DockBar = () => (
  <Dock>
    {dockLeft.map(({ name, Art, badge }) => (
      <DockItem key={name} aria-label={name}><Art />{badge && <Badge>{badge}</Badge>}</DockItem>
    ))}
    <DockRule />
    {dockRight.map(({ name, Art, Item = DockItem }) => (
      <Item key={name} aria-label={name}><Art /></Item>
    ))}
    <DockRule $last />
    <DockItem aria-label="Minimized window"><MinimizedWindow /></DockItem>
    <TallDockItem aria-label="Trash"><TrashTile /></TallDockItem>
  </Dock>
);

export default function App() {
  return (
    <Screen>
      <GlobalStyle />
      <Window>
        <BrowserTabs />
        <BrowserToolbar />
        <CloudHeader />
        <Content>
          <SideNav />
          <Main>
            <Files>
              <Breadcrumbs />
              <Recommendations>
                {recommended.map((r) => (
                  <RecCard key={r.name} href="#">
                    <FileIcon type={r.type} />
                    <div>
                      <RecName $latin={isLatin(r.name)}>
                        <RecStem $cut={r.cut}>{r.name}</RecStem>
                        <Muted>{r.ext}</Muted>
                      </RecName>
                      <Muted>最近修改</Muted>
                    </div>
                  </RecCard>
                ))}
              </Recommendations>
              <FileTable />
            </Files>
            <ScrollTrack><ScrollThumb /></ScrollTrack>
          </Main>
        </Content>
      </Window>
      <DockBar />
    </Screen>
  );
}
